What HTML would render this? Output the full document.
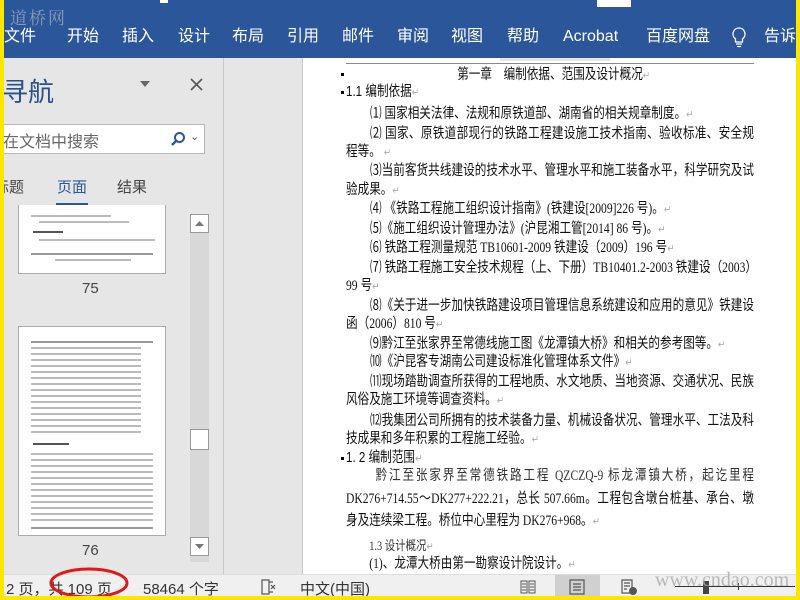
<!DOCTYPE html>
<html><head><meta charset="utf-8"><style>
*{margin:0;padding:0;box-sizing:border-box}
body{width:800px;height:600px;overflow:hidden;position:relative;background:#e6e6e6;font-family:"Liberation Sans","Noto Sans CJK SC",sans-serif}
.a{position:absolute;white-space:nowrap}
#rib{left:0;top:0;width:800px;height:58px;background:#2b579a}
.tab{position:absolute;top:27px;color:#fff;font-size:16px;line-height:20px;white-space:nowrap}
#page{left:303px;top:58px;width:493px;height:516px;background:#fff}
#doc{position:absolute;left:346px;top:0;width:510px;height:600px;transform:scaleX(0.8);transform-origin:0 0}
.d{position:absolute;font-family:"Liberation Serif","Noto Sans CJK SC",serif;font-size:14.5px;line-height:18px;color:#111;white-space:nowrap}
.j{width:510px;text-align:justify;text-align-last:justify;left:0;white-space:normal;height:18px;overflow:hidden}
.r{color:#aaa;font-size:11px}
#status{left:0;top:574px;width:800px;height:26px;background:#f0f0f0;border-top:1px solid #ddd}
.st{position:absolute;top:578px;font-size:15px;color:#333;white-space:nowrap}
.thumb{position:absolute;background:#fff;border:1px solid #aaa}
.tl{position:absolute;height:2px;background:#bbb}
</style></head><body>
<div class="a" id="rib"></div>
<div class="a" style="left:10px;top:4px;font-family:'Liberation Serif','Noto Serif CJK SC',serif;font-size:17px;color:#8a9bb5;letter-spacing:2px">道桥网</div>
<div class="a" style="left:160px;top:0;width:8px;height:3px;background:#fff"></div>
<div class="a" style="left:597px;top:0;width:34px;height:7px;background:#fff"></div>
<div class="tab" style="left:4px">文件</div>
<div class="tab" style="left:67px">开始</div>
<div class="tab" style="left:122px">插入</div>
<div class="tab" style="left:178px">设计</div>
<div class="tab" style="left:232px">布局</div>
<div class="tab" style="left:287px">引用</div>
<div class="tab" style="left:342px">邮件</div>
<div class="tab" style="left:397px">审阅</div>
<div class="tab" style="left:451px">视图</div>
<div class="tab" style="left:507px">帮助</div>
<div class="tab" style="left:563px">Acrobat</div>
<div class="tab" style="left:646px">百度网盘</div>
<svg class="a" style="left:730px;top:26px" width="18" height="24" viewBox="0 0 18 24"><path d="M9 2a6 6 0 0 0-3.5 10.9V16h7v-3.1A6 6 0 0 0 9 2zM6 18h6M7 20.5h4" fill="none" stroke="#fff" stroke-width="1.3"/></svg>
<div class="tab" style="left:764px">告诉我</div>

<!-- nav panel -->
<div class="a" style="left:0;top:58px;width:224px;height:516px;background:#e6e6e6;border-right:1px solid #c8c8c8"></div>
<div class="a" style="left:225px;top:58px;width:78px;height:516px;background:#e6e6e6;border-right:1px solid #c8c8c8"></div>
<div class="a" style="left:2px;top:72px;font-size:26px;color:#2b4f86">寻航</div>
<svg class="a" style="left:139px;top:80px" width="12" height="8"><path d="M1 1h10L6 7z" fill="#666"/></svg>
<svg class="a" style="left:190px;top:78px" width="13" height="13"><path d="M1 1l11 11M12 1L1 12" stroke="#555" stroke-width="1.6"/></svg>
<div class="a" style="left:0;top:124px;width:205px;height:30px;background:#fff;border:1px solid #b8b8b8;border-left:none"></div>
<div class="a" style="left:3px;top:128px;font-size:16px;color:#666">在文档中搜索</div>
<svg class="a" style="left:170px;top:131px" width="16" height="16"><circle cx="9.5" cy="6.5" r="4.5" fill="none" stroke="#2b579a" stroke-width="2"/><path d="M6 10l-4 4" stroke="#2b579a" stroke-width="2.4"/></svg>
<div class="a" style="left:190px;top:130px;font-size:11px;color:#555">⌄</div>
<div class="a" style="left:-6px;top:176px;font-size:15px;color:#444">标题</div>
<div class="a" style="left:57px;top:176px;font-size:15px;color:#2b579a">页面</div>
<div class="a" style="left:117px;top:176px;font-size:15px;color:#444">结果</div>
<div class="a" style="left:56px;top:203px;width:32px;height:4px;background:#2b579a"></div>
<div class="thumb" style="left:18px;top:205px;width:148px;height:69px;border-top:none">
<div class="tl" style="left:12px;top:10px;width:80px"></div>
<div class="tl" style="left:20px;top:16px;width:90px"></div>
<div class="tl" style="left:14px;top:26px;width:30px;background:#555"></div>
<div class="tl" style="left:20px;top:34px;width:116px"></div>
<div class="tl" style="left:12px;top:48px;width:122px;background:#999"></div>
<div class="tl" style="left:36px;top:54px;width:76px"></div>
</div>
<div class="a" style="left:82px;top:280px;font-size:15px;color:#444">75</div>
<div class="thumb" style="left:18px;top:326px;width:148px;height:210px">
<div class="tl" style="left:12px;top:14px;width:122px;background:#999"></div>
<div class="tl" style="left:12px;top:20px;width:110px;height:90px;background:repeating-linear-gradient(#bbb 0 2px,#fff 2px 6px)"></div>
<div class="tl" style="left:14px;top:116px;width:36px;background:#555"></div>
<div class="tl" style="left:12px;top:126px;width:122px;height:70px;background:repeating-linear-gradient(#bbb 0 2px,#fff 2px 6px)"></div>
<div class="tl" style="left:12px;top:200px;width:122px;background:#999"></div>
</div>
<div class="a" style="left:82px;top:542px;font-size:15px;color:#444">76</div>
<div class="a" style="left:190px;top:214px;width:19px;height:348px;background:#d8d8d8"></div>
<div class="a" style="left:190px;top:214px;width:19px;height:19px;background:#fff;border:1px solid #999"></div>
<svg class="a" style="left:194px;top:220px" width="11" height="7"><path d="M1 6h9L5.5 1z" fill="#777"/></svg>
<div class="a" style="left:190px;top:429px;width:19px;height:21px;background:#fff;border:1px solid #999"></div>
<div class="a" style="left:190px;top:537px;width:19px;height:19px;background:#fff;border:1px solid #999"></div>
<svg class="a" style="left:194px;top:543px" width="11" height="7"><path d="M1 1h9L5.5 6z" fill="#777"/></svg>

<!-- page -->
<div class="a" id="page"></div>
<div class="a" style="left:346px;top:63px;width:408px;height:1px;background:#888"></div>
<div class="a" style="left:500px;top:58px;width:110px;height:3px;background:#e4e4e4"></div>
<div class="a" style="left:341px;top:73px;width:3px;height:3px;background:#000"></div>
<div class="a" style="left:341px;top:91px;width:3px;height:3px;background:#000"></div>
<div class="a" style="left:341px;top:457px;width:3px;height:3px;background:#000"></div>
<div id="doc">
<div class="d" style="left:139px;top:66px">第一章　编制依据、范围及设计概况<span class="r">↵</span></div>
<div class="d" style="left:0;top:83px;font-family:'Liberation Sans','Noto Sans CJK SC',sans-serif">1.1 编制依据<span class="r">↵</span></div>
<div class="d" style="left:30px;top:105px">⑴ 国家相关法律、法规和原铁道部、湖南省的相关规章制度。<span class="r">↵</span></div>
<div class="d j" style="left:30px;width:480px;top:125px">⑵ 国家、原铁道部现行的铁路工程建设施工技术指南、验收标准、安全规</div>
<div class="d" style="left:0;top:143px">程等。 <span class="r">↵</span></div>
<div class="d j" style="left:30px;width:480px;top:162px">⑶当前客货共线建设的技术水平、管理水平和施工装备水平，科学研究及试</div>
<div class="d" style="left:0;top:181px">验成果。<span class="r">↵</span></div>
<div class="d" style="left:30px;top:200px">⑷ 《铁路工程施工组织设计指南》(铁建设[2009]226 号)。<span class="r">↵</span></div>
<div class="d" style="left:30px;top:220px">⑸《施工组织设计管理办法》(沪昆湘工管[2014] 86 号)。<span class="r">↵</span></div>
<div class="d" style="left:30px;top:239px">⑹ 铁路工程测量规范 TB10601-2009 铁建设（2009）196 号<span class="r">↵</span></div>
<div class="d j" style="left:30px;width:480px;top:259px">⑺ 铁路工程施工安全技术规程（上、下册）TB10401.2-2003 铁建设（2003）</div>
<div class="d" style="left:0;top:277px">99 号<span class="r">↵</span></div>
<div class="d j" style="left:30px;width:480px;top:297px">⑻《关于进一步加快铁路建设项目管理信息系统建设和应用的意见》铁建设</div>
<div class="d" style="left:0;top:315px">函（2006）810 号<span class="r">↵</span></div>
<div class="d" style="left:30px;top:335px">⑼黔江至张家界至常德线施工图《龙潭镇大桥》和相关的参考图等。<span class="r">↵</span></div>
<div class="d" style="left:30px;top:353px">⑽《沪昆客专湖南公司建设标准化管理体系文件》<span class="r">↵</span></div>
<div class="d j" style="left:30px;width:480px;top:373px">⑾现场踏勘调查所获得的工程地质、水文地质、当地资源、交通状况、民族</div>
<div class="d" style="left:0;top:391px">风俗及施工环境等调查资料。<span class="r">↵</span></div>
<div class="d j" style="left:30px;width:480px;top:412px">⑿我集团公司所拥有的技术装备力量、机械设备状况、管理水平、工法及科</div>
<div class="d" style="left:0;top:430px">技成果和多年积累的工程施工经验。<span class="r">↵</span></div>
<div class="d" style="left:0;top:449px;font-family:'Liberation Sans','Noto Sans CJK SC',sans-serif">1. 2 编制范围<span class="r">↵</span></div>
<div class="d j" style="left:37px;width:473px;top:467px;color:#333">黔江至张家界至常德铁路工程 QZCZQ-9 标龙潭镇大桥，起讫里程</div>
<div class="d j" style="top:490px">DK276+714.55～DK277+222.21，总长 507.66m。工程包含墩台桩基、承台、墩台</div>
<div class="d" style="left:0;top:512px">身及连续梁工程。桥位中心里程为 DK276+968。<span class="r">↵</span></div>
<div class="d" style="left:29px;top:537px;font-size:13px;color:#333">1.3 设计概况<span class="r">↵</span></div>
<div class="d" style="left:29px;top:555px">(1)、龙潭大桥由第一勘察设计院设计。<span class="r">↵</span></div>
</div>

<!-- status -->
<div class="a" id="status"></div>
<div class="st" style="left:6px">2 页，共 109 页</div>
<div class="st" style="left:143px">58464 个字</div>
<svg class="a" style="left:260px;top:579px" width="18" height="16"><path d="M2 1h7v14H2zM9 3h4M9 13h4M11 6l4 4M15 6l-4 4" fill="none" stroke="#555" stroke-width="1.2"/></svg>
<div class="st" style="left:300px">中文(中国)</div>
<svg class="a" style="left:519px;top:579px" width="18" height="16"><path d="M2 2h6v12H2zM10 2h6v12h-6zM3 5h4M3 8h4M3 11h4M11 5h4M11 8h4M11 11h4" fill="none" stroke="#555" stroke-width="1"/></svg>
<div class="a" style="left:555px;top:575px;width:45px;height:25px;background:#d0d0d0"></div>
<svg class="a" style="left:568px;top:579px" width="18" height="16"><path d="M2 1h14v14H2zM5 5h8M5 8h8M5 11h8" fill="none" stroke="#555" stroke-width="1.2"/></svg>
<svg class="a" style="left:620px;top:579px" width="18" height="16"><path d="M2 1h10v13H2zM4 4h6M4 7h6M4 10h3" fill="none" stroke="#555" stroke-width="1.2"/><circle cx="13" cy="12" r="4" fill="#555"/></svg>
<div class="a" style="left:675px;top:586px;width:120px;height:1px;background:#333"></div>
<div class="a" style="left:703px;top:581px;width:6px;height:13px;background:#444"></div>
<div class="a" style="left:738px;top:583px;width:1px;height:7px;background:#333"></div>
<div class="a" style="left:655px;top:569px;font-family:'Liberation Serif',serif;font-size:20px;color:#aaa;opacity:.8">www.cndao.com</div>
<svg class="a" style="left:48px;top:566px" width="82" height="34"><ellipse cx="41" cy="17" rx="38" ry="14" fill="none" stroke="#e01818" stroke-width="3"/></svg>

<!-- yellow frame -->
<div class="a" style="left:0;top:0;width:4px;height:600px;background:#ffe600"></div>
<div class="a" style="left:796px;top:0;width:4px;height:600px;background:#ffe600"></div>
<div class="a" style="left:0;top:596px;width:800px;height:4px;background:#ffe600"></div>
</body></html>
